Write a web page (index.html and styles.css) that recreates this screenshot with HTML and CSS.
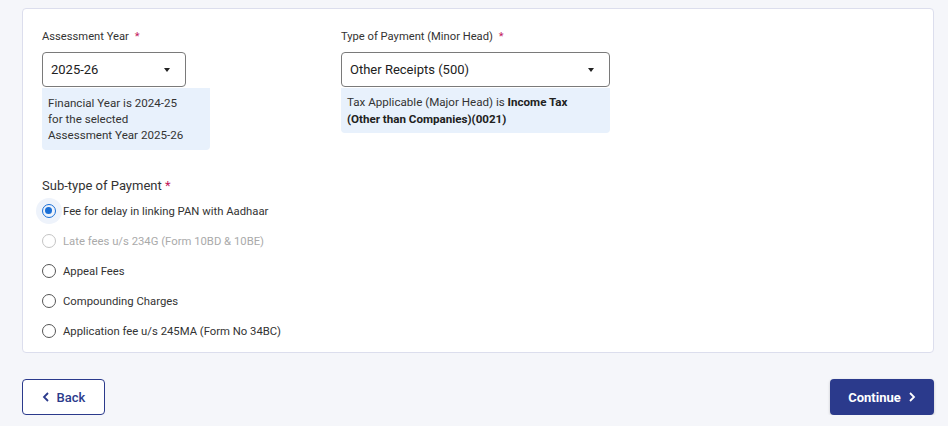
FILE: index.html
```html
<!DOCTYPE html>
<html lang="en">
<head>
    <meta charset="UTF-8">
    <meta name="viewport" content="width=device-width, initial-scale=1.0">
    <title>e-Pay Tax</title>
    <link rel="stylesheet" href="styles.css">
</head>
<body>
    <div class="card">
        <div class="row">
            <div class="field field-year">
                <label class="label">Assessment Year <span class="req">*</span></label>
                <div class="select select-year">
                    <span>2025-26</span>
                    <span class="caret"></span>
                </div>
                <div class="info info-year">
                    Financial Year is 2024-25<br>
                    for the selected<br>
                    Assessment Year 2025-26
                </div>
            </div>
            <div class="field field-type">
                <label class="label">Type of Payment (Minor Head) <span class="req">*</span></label>
                <div class="select select-type">
                    <span>Other Receipts (500)</span>
                    <span class="caret"></span>
                </div>
                <div class="info">
                    Tax Applicable (Major Head) is <b>Income Tax</b><br>
                    <b>(Other than Companies)(0021)</b>
                </div>
            </div>
        </div>

        <div class="subtype">
            <div class="subtype-label">Sub-type of Payment <span class="req">*</span></div>
            <ul class="radios">
                <li class="radio checked"><span class="dot"></span>Fee for delay in linking PAN with Aadhaar</li>
                <li class="radio disabled"><span class="dot"></span>Late fees u/s 234G (Form 10BD &amp; 10BE)</li>
                <li class="radio"><span class="dot"></span>Appeal Fees</li>
                <li class="radio"><span class="dot"></span>Compounding Charges</li>
                <li class="radio"><span class="dot"></span>Application fee u/s 245MA (Form No 34BC)</li>
            </ul>
        </div>
    </div>

    <div class="actions">
        <button class="btn btn-back">
            <svg width="8" height="10" viewBox="0 0 8 10"><path d="M6 1 L2 5 L6 9" fill="none" stroke="currentColor" stroke-width="1.8"/></svg>
            Back
        </button>
        <button class="btn btn-continue">
            Continue
            <svg width="8" height="10" viewBox="0 0 8 10"><path d="M2 1 L6 5 L2 9" fill="none" stroke="currentColor" stroke-width="1.8"/></svg>
        </button>
    </div>
</body>
</html>
```

FILE: styles.css
```css
body {
    font-family: Roboto, "Liberation Sans", sans-serif;
    margin: 0;
    padding: 8px 14px 0 22px;
    background-color: #f5f6fa;
    color: #212121;
}

.card {
    background: white;
    border: 1px solid #dcdeed;
    border-radius: 4px;
    padding: 20px 19px 14px 19px;
    height: 309px;
}

.row {
    display: flex;
}

.field {
    display: flex;
    flex-direction: column;
    align-items: flex-start;
}

.field-year {
    width: 299px;
}

.field-type {
    width: 269px;
}

.label {
    font-size: 11.2px;
    line-height: 16px;
    color: #333;
    margin-bottom: 7px;
}

.req {
    color: #c2185b;
    margin-left: 3px;
}

.select {
    box-sizing: border-box;
    display: flex;
    align-items: center;
    justify-content: space-between;
    height: 35px;
    padding: 0 15px 0 8px;
    border: 1px solid #7a7a7a;
    border-radius: 4px;
    font-size: 13px;
    color: #212121;
}

.select-year {
    width: 144px;
}

.select-type {
    width: 269px;
}

.caret {
    width: 0;
    height: 0;
    border-left: 3.5px solid transparent;
    border-right: 3.5px solid transparent;
    border-top: 4px solid #222;
}

.info {
    box-sizing: border-box;
    width: 269px;
    margin-top: 1px;
    padding: 6px 6px 6px 6px;
    background: #e8f1fc;
    border-radius: 0 0 4px 4px;
    font-size: 11.6px;
    line-height: 16.5px;
    color: #333;
}

.info-year {
    width: 168px;
    padding: 7px 6px;
    line-height: 16px;
}

.info b {
    font-weight: 700;
    color: #212121;
}

.subtype {
    margin-top: 28px;
}

.subtype-label {
    font-size: 13px;
    line-height: 16px;
    color: #333;
}

.subtype-label .req {
    margin-left: 0;
}

.radios {
    list-style: none;
    margin: 2px 0 0 0;
    padding: 0;
}

.radio {
    display: flex;
    align-items: center;
    height: 30px;
    font-size: 11.3px;
    color: #333;
}

.dot {
    position: relative;
    box-sizing: border-box;
    width: 14px;
    height: 14px;
    margin-right: 7px;
    border: 1px solid #555;
    border-radius: 50%;
}

.radio.checked .dot {
    border-color: #1a6fd6;
    border-width: 1.5px;
}

.radio.checked .dot::before {
    content: "";
    position: absolute;
    left: -7px;
    top: -7px;
    width: 26px;
    height: 26px;
    border-radius: 50%;
    background: #eef3fb;
    z-index: -1;
}

.radio.checked .dot::after {
    content: "";
    position: absolute;
    left: 2px;
    top: 2px;
    width: 7px;
    height: 7px;
    border-radius: 50%;
    background: #1a6fd6;
}

.radio.checked {
    position: relative;
    z-index: 0;
}

.radio.disabled {
    color: #aaa;
}

.radio.disabled .dot {
    border-color: #c4c4c4;
}

.actions {
    display: flex;
    justify-content: space-between;
    margin-top: 26px;
}

.btn {
    display: flex;
    align-items: center;
    justify-content: center;
    gap: 7px;
    height: 36px;
    border-radius: 4px;
    font-family: Roboto, "Liberation Sans", sans-serif;
    font-size: 13px;
    cursor: pointer;
}

.btn-back {
    width: 83px;
    background: white;
    color: #2b3a8c;
    border: 1px solid #2b3a8c;
    font-weight: 500;
}

.btn-continue {
    width: 104px;
    background: #2b3a8c;
    color: white;
    border: none;
    font-weight: 700;
    box-shadow: 0 1px 3px rgba(0, 0, 0, 0.2);
}
```
